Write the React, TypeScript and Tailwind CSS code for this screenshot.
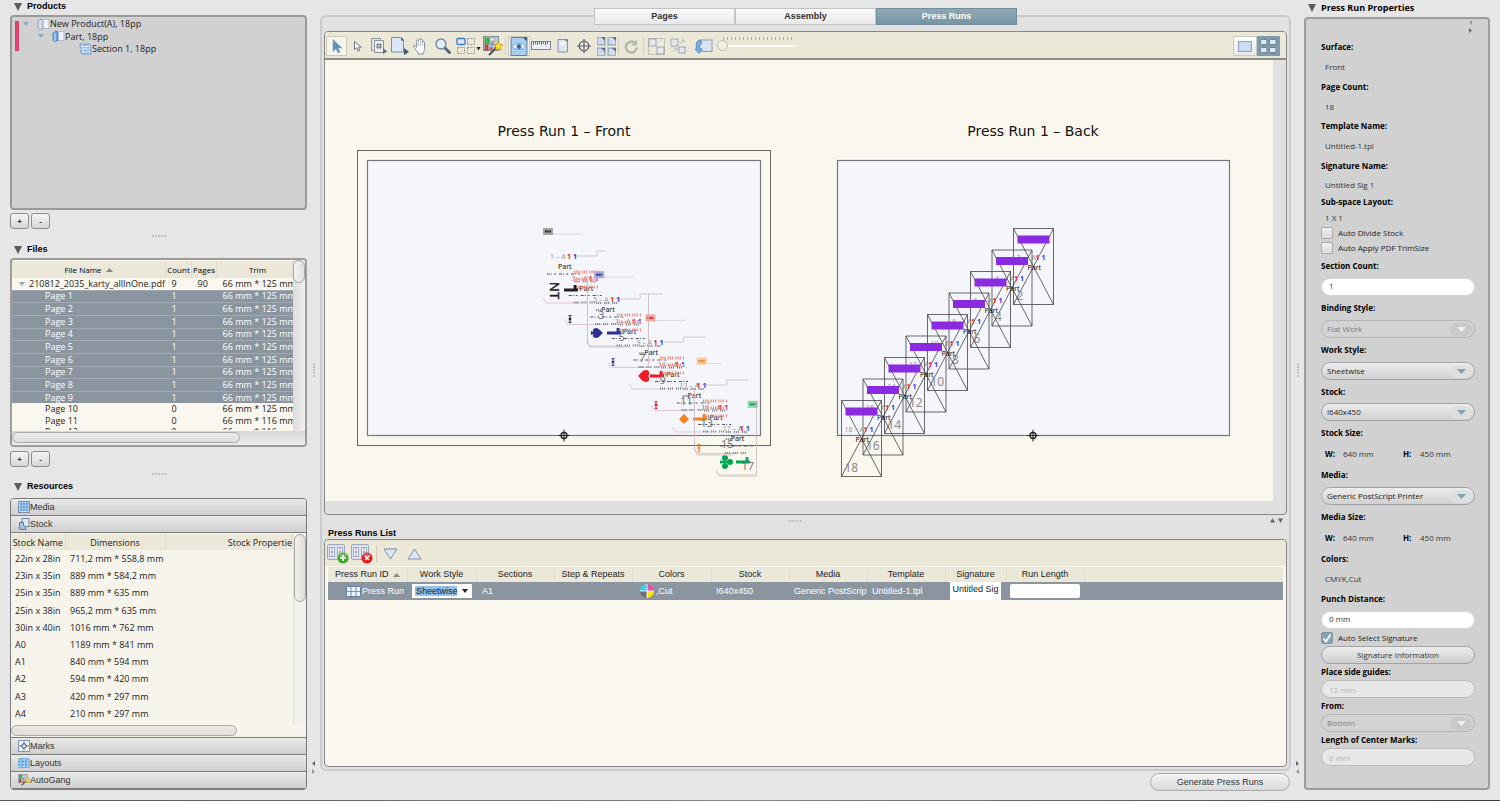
import { useState } from 'react'
import type { ReactNode } from 'react'
import clsx from 'clsx'

const sans = "font-['Open_Sans','Noto_Sans',sans-serif]"
const arial = "font-['Liberation_Sans',Arial,sans-serif]"

const filePages = [
  { name: 'Page 1', count: 1, trim: '66 mm * 125 mm' },
  { name: 'Page 2', count: 1, trim: '66 mm * 125 mm' },
  { name: 'Page 3', count: 1, trim: '66 mm * 125 mm' },
  { name: 'Page 4', count: 1, trim: '66 mm * 125 mm' },
  { name: 'Page 5', count: 1, trim: '66 mm * 125 mm' },
  { name: 'Page 6', count: 1, trim: '66 mm * 125 mm' },
  { name: 'Page 7', count: 1, trim: '66 mm * 125 mm' },
  { name: 'Page 8', count: 1, trim: '66 mm * 125 mm' },
  { name: 'Page 9', count: 1, trim: '66 mm * 125 mm' },
  { name: 'Page 10', count: 0, trim: '66 mm * 125 mm' },
  { name: 'Page 11', count: 0, trim: '66 mm * 116 mm' },
  { name: 'Page 12', count: 0, trim: '66 mm * 116 mm' },
]

const stocks = [
  ['22in x 28in', '711,2 mm * 558,8 mm'],
  ['23in x 35in', '889 mm * 584,2 mm'],
  ['25in x 35in', '889 mm * 635 mm'],
  ['25in x 38in', '965,2 mm * 635 mm'],
  ['30in x 40in', '1016 mm * 762 mm'],
  ['A0', '1189 mm * 841 mm'],
  ['A1', '840 mm * 594 mm'],
  ['A2', '594 mm * 420 mm'],
  ['A3', '420 mm * 297 mm'],
  ['A4', '210 mm * 297 mm'],
]

/* ---------- small shared parts ---------- */

const SectionTitle = ({ children, className }: { children: ReactNode; className?: string }) => (
  <h2 className={clsx('flex items-center gap-[5px] pl-1 font-bold text-black', className)}>
    <svg width="8" height="8" viewBox="0 0 8 8"><path d="M0 0h8L4 8z" fill="#5c5c5c" /></svg>
    {children}
  </h2>
)

const Dots = ({ vertical }: { vertical?: boolean }) => (
  <div className={clsx('flex gap-px', vertical && 'flex-col')}>
    {[0, 1, 2, 3, 4].map(i => <span key={i} className="size-[2px] bg-[#c2c2c2]" />)}
  </div>
)

const AddRemove = ({ what }: { what: string }) => (
  <div className={clsx('flex gap-[2px]', arial)}>
    {['+', '-'].map(sign => (
      <button
        key={sign}
        aria-label={`${sign === '+' ? 'Add' : 'Remove'} ${what}`}
        className="h-4 w-[19px] rounded-[3px] border border-[#8c8c8c] bg-linear-to-b from-[#f6f6f6] to-[#d6d6d6] pt-[2px] text-[8px] leading-none font-bold text-[#333]"
      >
        {sign}
      </button>
    ))}
  </div>
)

const SortArrow = () => (
  <svg className="ml-1 inline" width="7" height="4" viewBox="0 0 7 4"><path d="M3.500 0L7 4H0z" fill="#8a8a80" /></svg>
)

const Twisty = () => (
  <svg width="6" height="4" viewBox="0 0 6 4"><path d="M0 0h6L3 4z" fill="#8ba9ba" /></svg>
)

const SideArrows = ({ first, dimFirst }: { first: 'left' | 'right'; dimFirst?: boolean }) => {
  const [a, b] = dimFirst ? ['#999', '#666'] : ['#666', '#999']
  return (
    <svg width="5" height="13" viewBox="0 0 5 13">
      {first === 'left'
        ? <><path d="M4 0v5L1 2.500z" fill={a} /><path d="M1 8v5l3-2.500z" fill={b} /></>
        : <><path d="M1 0v5l3-2.500z" fill={a} /><path d="M4 8v5L1 10.500z" fill={b} /></>}
    </svg>
  )
}

/* ---------- icons ---------- */

const BookIcon = ({ blue }: { blue?: boolean }) => (
  <svg width="13" height="12" viewBox="0 0 13 12">
    <rect x="5" y="1.500" width="7" height="9" fill="#eef1f8" stroke="#b3b8cc" />
    <path d="M1 3l3-2 2 1v8.500l-3 1-2-1z" fill={blue ? '#6da3e3' : '#c9d3e4'} stroke={blue ? '#4a7bb8' : '#8b97ad'} strokeWidth=".8" />
    <path d="M3 3v8" stroke="#fff" strokeWidth=".7" />
  </svg>
)

const SectionIcon = () => (
  <svg width="13" height="12" viewBox="0 0 13 12">
    <path d="M1 1h10l1 2-1 2 1 2v4H3L1 9l2-3-2-3z" fill="#9cc9f2" stroke="#6f93bd" strokeWidth=".8" />
    <path d="M2 3.500h9M3 6h8M3 9h8" stroke="#fff" strokeWidth="1" />
    <path d="M6 2v8M9 2v8" stroke="#5a9fe0" strokeWidth=".5" />
  </svg>
)

const MediaIcon = () => (
  <svg width="12" height="12" viewBox="0 0 12 12">
    <rect x=".5" y=".5" width="11" height="11" fill="#cfdcee" stroke="#7a8ba6" />
    {[1.5, 4.5, 7.5].map(x => [1.5, 4.5, 7.5].map(y => <rect key={`${x}-${y}`} x={x + .5} y={y} width="2.400" height="2.400" fill="#5ea4ea" />))}
  </svg>
)

const StockIcon = () => (
  <svg width="12" height="12" viewBox="0 0 12 12">
    <path d="M4 .5h7v8H4z" fill="#dfe8f6" stroke="#6c80a3" />
    <path d="M1.500 4.500h4v3l2 1v3h-5c-2 0-2-3-1-3z" fill="#a9c4e6" stroke="#5f769c" />
    <circle cx="3" cy="10" r="1.200" fill="#fff" stroke="#5f769c" strokeWidth=".7" />
  </svg>
)

const MarksIcon = () => (
  <svg width="12" height="12" viewBox="0 0 12 12" fill="none">
    <rect x=".5" y=".5" width="11" height="11" fill="#e9eef6" stroke="#8296b3" />
    <path d="M6 1.500v9M1.500 6h9" stroke="#5a6f93" />
    <path d="M6 3L9 6 6 9 3 6z" fill="#8da6cb" stroke="#5a6f93" />
    <circle cx="6" cy="6" r="1" fill="#fff" />
  </svg>
)

const LayoutsIcon = () => (
  <svg width="12" height="10" viewBox="0 0 12 10">
    <rect x=".5" y=".5" width="11" height="9" rx="1" fill="#a7d0f7" stroke="#5fa0e0" strokeDasharray="2 1" />
    <path d="M4 1v8M8 1v8M1 3.500h10M1 6.500h10" stroke="#3f8ddb" strokeWidth=".8" strokeDasharray="2 1" />
  </svg>
)

const GangIcon = ({ size = 12 }: { size?: number }) => (
  <svg width={size} height={size} viewBox="0 0 20 20">
    <rect x=".5" y=".5" width="15" height="14" fill="#c4c8ce" stroke="#868d98" />
    <rect x="2" y="2" width="4" height="6" fill="#39c24a" stroke="#2a7d35" strokeWidth=".6" />
    <rect x="7" y="2" width="4" height="3" fill="#fff" stroke="#777" strokeWidth=".6" />
    <rect x="7.500" y="6.500" width="3" height="3" fill="#6d87d8" />
    <rect x="2" y="9" width="3" height="5" fill="#e24545" stroke="#903030" strokeWidth=".6" />
    <rect x="6" y="11" width="4" height="3" fill="#e26d5d" />
    <path d="M6 19L14 11" stroke="#444b55" strokeWidth="1.800" />
    <path d="M15.500 5.500l1.200 3 3.200.4-2.300 2.200.5 3.200-2.700-1.500-2.900 1.400.6-3.100-2.200-2.300 3.100-.4z" fill="#ffe326" stroke="#b58e12" strokeWidth=".7" />
  </svg>
)

const PointerIcon = () => (
  <svg width="18" height="18" viewBox="0 0 18 18">
    <path d="M5 2.500v12l3-2.700 2 4.200 2-1-2-4h4z" fill="#5e92bd" stroke="#7f9fb8" strokeWidth=".6" />
  </svg>
)

const SubPointerIcon = () => (
  <svg width="16" height="18" viewBox="0 0 16 18">
    <path d="M4.500 4.500v8l2.200-1.800 1.600 3.400 1.500-.7-1.500-3.200h3z" fill="#fff" stroke="#6d7787" />
  </svg>
)

const PageNumberIcon = () => (
  <svg width="18" height="18" viewBox="0 0 18 18">
    <path d="M1.500 1.500h9v12h-9z" fill="#dfe1e3" stroke="#9199a3" />
    <path d="M4.500 3.500h9v12h-9z" fill="#eef0f2" stroke="#8a929d" />
    <path d="M7.800 6v6M10.300 6v6M6 7.800h6M6 10.200h6" stroke="#5d6673" strokeWidth=".8" />
    <path d="M13 11v6l4-2.500z" fill="#55697f" />
  </svg>
)

const PageCursorIcon = () => (
  <svg width="18" height="20" viewBox="0 0 18 20">
    <path d="M.5 1.500h10l2 2.500v12H.5z" fill="#dbe7f7" stroke="#7d8fa8" />
    <path d="M10 1.500v3h3z" fill="#3f5878" />
    <path d="M13 12v7l5-3z" fill="#44597a" />
  </svg>
)

const HandIcon = () => (
  <svg width="18" height="18" viewBox="0 0 18 18">
    <path d="M6 15.500C4 13 2 10.500 1.500 9c.8-1 2-.2 3.200 1.400V4c.3-1.300 1.700-1.200 1.900 0V2.300c.4-1.300 1.800-1.200 2 0v.9c.4-1.200 1.800-1 2 .2v1.800c.5-1 1.900-.8 1.900.5v5.800c0 2-1 3.500-1.500 5.500H6z" fill="#fff" stroke="#75839a" strokeWidth=".9" />
    <path d="M6.700 4v5M8.700 4v5M10.700 5v4" stroke="#9aa7bb" strokeWidth=".7" />
  </svg>
)

const ZoomIcon = () => (
  <svg width="18" height="18" viewBox="0 0 18 18">
    <path d="M10.500 10.500l5 5" stroke="#55667d" strokeWidth="3" strokeLinecap="round" />
    <circle cx="7" cy="7" r="5" fill="#e1ecf8" stroke="#76879e" strokeWidth="1.400" />
  </svg>
)

const LayoutPickIcon = () => (
  <svg width="25" height="18" viewBox="0 0 25 18" fill="none">
    <rect x="1" y="1.500" width="8" height="6" rx="1" fill="#dbe9fa" stroke="#3f7cc4" strokeWidth="1.300" />
    <g stroke="#929a9e" strokeDasharray="2 1">
      <rect x="11.500" y="1.500" width="7" height="6" />
      <rect x="1.500" y="10.500" width="7" height="6" />
      <rect x="11.500" y="10.500" width="7" height="6" />
    </g>
    <path d="M20.500 10h4l-2 3.500z" fill="#222" />
  </svg>
)

const EyeIcon = () => (
  <svg width="18" height="19" viewBox="0 0 18 19">
    <path d="M1 .5h16v18H1z" fill="#a9cdef" stroke="#5e82a8" />
    <path d="M13 .5h4v4z" fill="#33577c" />
    <path d="M2.500 9.500C6 5.500 12 5.500 15.500 9.500 12 13.500 6 13.500 2.500 9.500z" fill="#fff" stroke="#6a97c2" strokeWidth=".8" />
    <circle cx="9" cy="9.500" r="2.600" fill="#3d86c2" /><circle cx="9" cy="9.500" r="1" fill="#1d4a72" />
  </svg>
)

const RulerIcon = () => (
  <svg width="20" height="10" viewBox="0 0 20 10">
    <rect x=".5" y=".5" width="19" height="8" fill="#e9eef8" stroke="#7b8494" />
    <path d="M2.500 1v3M4.500 1v2M6.500 1v3M8.500 1v2M10.500 1v3M12.500 1v2M14.500 1v3M16.500 1v2" stroke="#566e9e" />
  </svg>
)

const SheetIcon = () => (
  <svg width="12" height="14" viewBox="0 0 12 14">
    <path d="M1 .5h9.500v12.500H1z" fill="#dde5f3" stroke="#8a94a6" />
    <path d="M7.500.5h3v3z" fill="#5e7393" /><path d="M3 3.500h5M3 5.500h5" stroke="#f6f9ff" />
  </svg>
)

const CrosshairIcon = () => (
  <svg width="16" height="16" viewBox="0 0 16 16" fill="none" stroke="#5b6470">
    <circle cx="8" cy="8" r="4.800" strokeWidth="1.300" /><path d="M8 1v14M1 8h14" strokeWidth="1.200" />
  </svg>
)

const FourSheetsIcon = () => (
  <svg width="19" height="19" viewBox="0 0 19 19">
    <rect width="19" height="19" fill="#c4c4bd" />
    {[[0, 0], [11, 0], [0, 11], [11, 11]].map(([x, y]) => (
      <g key={`${x}-${y}`}>
        <rect x={x + .5} y={y + .5} width="7" height="7" fill="#cfdcef" stroke="#a5b0c0" />
        <path d={`M${x + 4} ${y}h4v4z`} fill="#59718f" />
      </g>
    ))}
    <path d="M9.500 0v19M0 9.500h19" stroke="#e9e8e0" strokeWidth="1" />
  </svg>
)

const RotateIcon = () => (
  <svg width="17" height="17" viewBox="0 0 17 17" fill="none">
    <path d="M11 4.200A5.500 5.500 0 1 0 13.800 9.500" stroke="#b4b7b2" strokeWidth="2.500" />
    <path d="M14 1v6.500H8z" fill="#b4b7b2" />
  </svg>
)

const GroupIcon = () => (
  <svg width="17" height="17" viewBox="0 0 17 17">
    <rect x=".5" y=".5" width="16" height="16" fill="none" stroke="#b0b0a6" strokeDasharray="2 1" />
    <rect x="1" y="1" width="7" height="7" fill="#e7eaf0" stroke="#9aa3b0" /><rect x="9" y="9" width="7" height="7" fill="#e7eaf0" stroke="#9aa3b0" />
  </svg>
)

const UngroupIcon = () => (
  <svg width="17" height="17" viewBox="0 0 17 17">
    <rect x="1" y="1" width="7" height="7" fill="#e1e4e8" stroke="#a7abb0" /><rect x="9" y="9" width="6" height="6" fill="#e7eaf0" stroke="#9aa3b0" />
    <path d="M10 6l4-4M11 2h3v3M3 14l4-4M4 10h3v3" stroke="#b3b4ab" fill="none" strokeWidth=".8" />
  </svg>
)

const TurnIcon = () => (
  <svg width="18" height="15" viewBox="0 0 18 15">
    <rect x="4.500" y="1" width="12.500" height="11.500" fill="#dbe3f1" stroke="#8d9bb3" />
    <path d="M5.500 1.500C1 1.500.8 5 1.500 10L0 10l4 4.500L7.500 10H5c-.8-3 0-5 2-6z" fill="#7aaee6" stroke="#3a76bb" strokeWidth=".7" />
  </svg>
)

const TablePlusIcon = ({ remove }: { remove?: boolean }) => (
  <svg width="22" height="20" viewBox="0 0 22 20">
    <rect x=".5" y=".5" width="17" height="15" rx="1" fill="#dce3ef" stroke="#9da8b9" />
    <path d="M2.500 3.500h5v9h-5zM10.500 3.500h5v9h-5zM5 3.500v9M13 3.500v9M2.500 8h5M10.500 8h5" stroke="#8f9db5" fill="#f3f6fb" strokeWidth=".8" />
    <circle cx="16" cy="14" r="5.500" fill={remove ? '#e01b22' : '#3fa528'} />
    <ellipse cx="16" cy="11.500" rx="4" ry="2.300" fill="#fff" opacity=".25" />
    {remove
      ? <path d="M14 12l4 4M18 12l-4 4" stroke="#fff" strokeWidth="1.500" />
      : <path d="M16 11v6M13 14h6" stroke="#fff" strokeWidth="1.600" />}
  </svg>
)

const ColorWheelIcon = () => (
  <svg width="14" height="14" viewBox="0 0 14 14">
    <path d="M7 7V0a7 7 0 0 0-7 7z" fill="#3ad0f0" /><path d="M7 7h7a7 7 0 0 0-7-7z" fill="#f04fa8" />
    <path d="M7 7v7a7 7 0 0 0 7-7z" fill="#ffe11a" /><path d="M7 7H0a7 7 0 0 0 7 7z" fill="#6d7176" />
    <path d="M7 0v14M0 7h14" stroke="#fff" strokeWidth=".8" />
  </svg>
)

/* ---------- left column ---------- */

const thCls = 'border-r border-[#dfdccb] bg-[#ebe8d9] font-normal'

const FilesPanel = () => (
  <div className="flex h-[189px] flex-col overflow-hidden rounded-[4px] border-2 border-[#9d9d97] bg-[#faf7ee]">
    <div className="flex min-h-0 flex-1">
      <div className="h-[170px] min-w-0 flex-1 overflow-hidden pt-px">
        <table className="h-[177px] w-full table-fixed border-collapse text-[9px] leading-[10px] whitespace-nowrap">
          <colgroup><col /><col className="w-[26px]" /><col className="w-[25px]" /><col className="w-[76px]" /></colgroup>
          <thead>
            <tr className="h-[17px] text-[8px]">
              <th className={thCls}>File Name<SortArrow /></th>
              <th className={thCls}>Count</th>
              <th className={thCls}>Pages</th>
              <th className={clsx(thCls, 'pl-[6px]')}>Trim</th>
            </tr>
          </thead>
          <tbody className="text-[#222]">
            <tr>
              <td className="pl-[7px]"><span className="flex items-center gap-1"><Twisty />210812_2035_karty_allInOne.pdf</span></td>
              <td className="pl-[6px]">9</td><td className="pl-[6px]">90</td>
              <td className="overflow-hidden pl-[6px]">66 mm * 125 mm</td>
            </tr>
            {filePages.map(p => (
              <tr key={p.name} className={p.count ? 'border-t border-[#a0a8b1] bg-[#8b95a0] text-white' : ''}>
                <td className="pl-[33px]">{p.name}</td>
                <td className="pl-[6px]">{p.count}</td>
                <td />
                <td className="overflow-hidden pl-[6px]">{p.trim}</td>
              </tr>
            ))}
          </tbody>
        </table>
      </div>
      <div className="w-[12px] bg-linear-to-r from-[#dcdcdc] to-[#efefef]">
        <div className="h-[23px] rounded-full border border-[#a5a5a5] bg-linear-to-r from-[#f4f4f4] to-[#dedede]" />
      </div>
    </div>
    <div className="h-[14px] bg-linear-to-b from-[#d8d8d8] to-[#ececec] py-px">
      <div className="h-[11px] w-[228px] rounded-full border border-[#a8a8a8] bg-linear-to-b from-[#ebebeb] to-[#dedede]" />
    </div>
  </div>
)

const AccordionBar = ({ icon, label }: { icon: ReactNode; label: string }) => (
  <button className={clsx('flex h-[17px] w-full shrink-0 items-center border-b border-[#7b7b7b] bg-linear-to-b from-[#e9e9e9] to-[#cfcfcf] pl-[7px] text-[9px] leading-none text-[#333]', arial)}>
    {icon}{label}
  </button>
)

const ResourcesPanel = () => (
  <div className="flex min-h-0 flex-1 flex-col overflow-hidden rounded-[4px] border border-[#7b7b7b]">
    <AccordionBar icon={<MediaIcon />} label="Media" />
    <AccordionBar icon={<StockIcon />} label="Stock" />
    <div className="flex min-h-0 flex-1 flex-col border-b border-[#7b7b7b] bg-[#f7f4ec] pt-px">
      <div className="flex min-h-0 flex-1">
        <div className="min-w-0 flex-1 overflow-hidden">
          <table className="h-[188px] w-full table-fixed border-collapse text-[9px] leading-none whitespace-nowrap text-[#222]">
            <colgroup><col className="w-[54px]" /><col className="w-[100px]" /><col /></colgroup>
            <thead>
              <tr className="h-4">
                <th className={thCls}>Stock Name</th>
                <th className={thCls}>Dimensions</th>
                <th className={clsx(thCls, 'text-right')}>Stock Propertie</th>
              </tr>
            </thead>
            <tbody>
              {stocks.map(([name, size]) => (
                <tr key={name} className="h-[17px]">
                  <td className="pl-1">{name}</td><td className="pl-[5px]">{size}</td><td />
                </tr>
              ))}
            </tbody>
          </table>
        </div>
        <div className="w-[13px] border-l border-[#e6e2d8] bg-[#f3f1eb]">
          <div className="h-[68px] rounded-full border border-[#a5a5a5] bg-linear-to-r from-[#f2f1ec] to-[#dfddd6]" />
        </div>
      </div>
      <div className="h-[12px]">
        <div className="h-[11px] w-[226px] rounded-full border border-[#aaa9a4] bg-linear-to-b from-[#ebe9e2] to-[#e0ded8]" />
      </div>
    </div>
    <AccordionBar icon={<MarksIcon />} label="Marks" />
    <AccordionBar icon={<LayoutsIcon />} label="Layouts" />
    <AccordionBar icon={<GangIcon />} label="AutoGang" />
  </div>
)

const LeftColumn = () => (
  <aside className="flex w-[297px] shrink-0 flex-col pb-[10px]">
    <SectionTitle className={clsx('h-[15px] pb-[2px] text-[9px]', arial)}>Products</SectionTitle>
    <div className="flex h-[195px] rounded-[4px] border-2 border-[#9a9a9a] bg-[#d1d1d1] pl-[3px]">
      <div className="mt-1 h-[30px] w-1 bg-[#e2426b]" />
      <ul className="pl-1 text-[9px] leading-[13px] text-[#222]">
        <li className="flex h-[13px] items-center"><Twisty /><span className="w-[8px]" /><BookIcon />New Product(A), 18pp</li>
        <li className="flex h-[12px] items-center pl-[15px]"><Twisty /><span className="w-[8px]" /><BookIcon blue />Part, 18pp</li>
        <li className="flex h-[13px] items-center pl-[56px]"><SectionIcon />Section 1, 18pp</li>
      </ul>
    </div>
    <div className="h-[19px] pt-[3px]"><AddRemove what="product" /></div>
    <div className="flex h-[13px] items-center justify-center"><Dots /></div>
    <SectionTitle className={clsx('h-[16px] text-[9px]', arial)}>Files</SectionTitle>
    <FilesPanel />
    <div className="h-[20px] pt-1"><AddRemove what="file" /></div>
    <div className="flex h-[13px] items-center justify-center"><Dots /></div>
    <SectionTitle className={clsx('h-[18px] pb-1 text-[9px]', arial)}>Resources</SectionTitle>
    <ResourcesPanel />
  </aside>
)

/* ---------- press sheet drawing ---------- */

const RegMark = ({ x, y }: { x: number; y: number }) => (
  <g stroke="#222" fill="none">
    <circle cx={x} cy={y} r="3" strokeWidth="1.300" /><path d={`M${x - 6} ${y}h12M${x} ${y - 6}v12`} />
  </g>
)

const suitColors = ['#222222', '#2e3192', '#ed1c24', '#f58220', '#00a651']
const badgeColors = ['#a3a3a3', '#a9a9d6', '#f7a99a', '#fbc79a', '#8fd3a8']

const Suit = ({ kind }: { kind: number }) => {
  const fill = suitColors[kind]
  if (kind === 0) return <text transform="translate(-4 -8) rotate(90)" fontSize="13" fill={fill} stroke={fill} strokeWidth=".4">NT</text>
  if (kind === 1) return <path d="M6 0C3-3 1-5-1-5c-3 0-4 3-2 4l-3-1v4l3-1c-2 1-1 4 2 4 2 0 4-2 7-5z" fill={fill} />
  if (kind === 2) return <path d="M-6 0C-3-3-1-6 2-6c4 0 4 5 2 6 2 1 2 6-2 6-3 0-5-3-8-6z" fill={fill} />
  if (kind === 3) return <path d="M0-5l5 5-5 5-5-5z" fill={fill} />
  return <g fill={fill}><circle cx="-1" cy="-4" r="3" /><circle cx="-1" cy="4" r="3" /><circle cx="4" cy="0" r="3" /><path d="M-6-1.500L4-.5v1L-6 1.500z" /></g>
}

const FrontCard = ({ i }: { i: number }) => {
  const x = 543 + i * 21.6
  const y = 228 + i * 21.5
  return (
    <g>
      {i % 2 === 0 && i < 8 && (
        <path d={`M${x + 31} ${y + 28}h23v-5h${i === 0 ? 8 : 22}`} stroke="#c9bcc2" fill="none" strokeWidth=".8" />
      )}
      <path d={`M${x} ${y + 70}l3 5h37`} stroke="#d5b7bb" fill="none" strokeWidth=".7" />
      <text x={x + 7} y={y + 31} fontSize="7" fill="#9a9a9a">{i * 2 + 1} – A</text>
      <text x={x + 24} y={y + 31} fontSize="7" fontWeight="bold" fill="#ee2222">1</text>
      <text x={x + 30} y={y + 31} fontSize="7" fontWeight="bold" fill="#3333ee">1</text>
      <text x={x + 15} y={y + 41} fontSize="7" fill="#111">Part</text>
      {/* greeked body copy */}
      <path d={`M${x + 4} ${y + 46}h35`} stroke="#555" strokeWidth="1.200" strokeDasharray="3 1 1 2 2 3" />
      {i > 0 && (
        <path
          d={`M${x + 10} ${y + 32}h22M${x + 10} ${y + 39}h5M${x + 9} ${y + 53}h24`}
          stroke="#777"
          strokeWidth="2.200"
          strokeDasharray="1 1 1 1 1 3"
        />
      )}
    </g>
  )
}

const FrontSuitCard = ({ kind }: { kind: number }) => {
  const x = 543 + kind * 51.2
  const y = 228 + kind * 43.2
  const bx = 564 + kind * 43
  const by = 290 + kind * 43
  const suitX = [554, 597, 644, 684, 726][kind]
  return (
    <g>
      {kind < 4 && <path d={`M${x + 10} ${y + 6}h${kind < 3 ? 30 : 14}`} stroke="#cfcfd6" strokeWidth=".8" />}
      <rect x={x} y={y} width="10" height="7" fill={badgeColors[kind]} />
      <path d={`M${x + 2} ${y + 3.5}h6`} stroke={suitColors[kind]} strokeWidth="2" strokeDasharray="2 .5" />
      {kind < 4 && (
        <g stroke="#ef8a7c" strokeWidth="2.800">
          {[0, 7, 15].map(dy => (
            <path key={dy} d={`M${bx + 10} ${by - 18 + dy}h24`} strokeDasharray="1.200 1 1.200 1 1.200 2" />
          ))}
        </g>
      )}
      <g transform={`translate(${suitX} ${by})`}><Suit kind={kind} /></g>
      <path d={`M${bx} ${by}h14M${bx + 11} ${by - 5}v5`} stroke={suitColors[kind]} strokeWidth="2.800" />
      {kind < 4 && <path d={`M${bx + 6} ${by + 25}v8`} stroke={suitColors[kind]} strokeWidth="2.500" strokeDasharray="1.500 1 3 1" />}
    </g>
  )
}

const BackCard = ({ i }: { i: number }) => {
  const x = 1013.500 - i * 21.5
  const y = 228.500 + i * 21.5
  const n = (i + 1) * 2
  return (
    <g>
      <path d={`M${x} ${y}h40v76h-40zM${x} ${y}l40 76M${x + 40} ${y}l-40 76`} stroke="#444" strokeWidth=".8" fill="none" />
      <rect x={x + 4} y={y + 7} width="32" height="8" fill="#8a2be2" />
      <text x={x + 3} y={y + 31} fontSize="7" fill="#999">{n}</text>
      <text x={x + 18} y={y + 31} fontSize="7" fill="#999">A</text>
      <text x={x + 22} y={y + 31} fontSize="7" fontWeight="bold" fill="#ee2222">1</text>
      <text x={x + 28} y={y + 31} fontSize="7" fontWeight="bold" fill="#3333ee">1</text>
      <text x={x + 14} y={y + 41} fontSize="7" fill="#111">Part</text>
      <text x={x + 3} y={y + 71} fontSize="12" fill="#8c8c8c">{n}</text>
    </g>
  )
}

const PressSheets = () => (
  <svg className="block size-full font-['Noto_Sans',sans-serif]" viewBox="325 60 948 441" role="img" aria-label="Press run sheets">
    <g className="font-['DejaVu_Sans',sans-serif]" fontSize="14" textAnchor="middle" fill="#111">
      <text x="564" y="136">Press Run 1 – Front</text>
      <text x="1033" y="136">Press Run 1 – Back</text>
    </g>
    <rect x="357.500" y="150.500" width="413" height="295" fill="none" stroke="#666" />
    <rect x="367.500" y="160.500" width="393" height="275" fill="#f4f6fc" stroke="#777" strokeWidth="1.200" />
    <rect x="837.500" y="160.500" width="392" height="275" fill="#f4f6fc" stroke="#777" strokeWidth="1.200" />
    {[0, 1, 2, 3, 4, 5, 6, 7, 8].map(i => <FrontCard key={i} i={i} />)}
    {[0, 1, 2, 3, 4].map(k => <FrontSuitCard key={k} kind={k} />)}
    {[3, 5, 7, 9, 11, 13, 15, 17].map((n, i) => (
      <text key={n} x={598 + i * 20.5} y={319 + i * 21.5} fontSize="11" fill="#777">{n}</text>
    ))}
    <path d="M587.500 275v67l3 5h40M648.500 293v72M694.500 388v62l3 5h35M756.500 401v75h-37l-3-4" stroke="#ccb8bd" strokeWidth=".8" fill="none" />
    <RegMark x={564} y={435.5} />
    {[0, 1, 2, 3, 4, 5, 6, 7, 8].map(i => <BackCard key={i} i={i} />)}
    <RegMark x={1033} y={435.5} />
  </svg>
)

/* ---------- centre ---------- */

const Tool = ({ label, active, wide, children }: { label: string; active?: boolean; wide?: boolean; children: ReactNode }) => (
  <button
    aria-label={label}
    title={label}
    className={clsx('flex h-[20px] shrink-0 items-center justify-center', wide ? 'w-[22px]' : 'w-[21px]', active && 'border border-[#cdcbb8] bg-[#f7f5ea]')}
  >
    {children}
  </button>
)

const Sep = () => <span className="mx-px h-[18px] w-px shrink-0 bg-[#d3d0bf]" />

const Toolbar = () => (
  <div className="flex h-[28px] shrink-0 items-center border-b-2 border-[#8d8d86] bg-[#ebe8d8] pt-[2px] pr-[6px] pl-px">
    <Tool label="Select" active><PointerIcon /></Tool>
    <Tool label="Sub-select"><SubPointerIcon /></Tool>
    <Tool label="Page numbering"><PageNumberIcon /></Tool>
    <Tool label="Page select"><PageCursorIcon /></Tool>
    <Tool label="Pan" wide><HandIcon /></Tool>
    <Tool label="Zoom" wide><ZoomIcon /></Tool>
    <button aria-label="Layout options" className="flex w-[28px] shrink-0 justify-center"><LayoutPickIcon /></button>
    <Tool label="Auto gang" wide><GangIcon size={20} /></Tool>
    <Sep />
    <span className="w-px" />
    <Tool label="Preview" wide active><EyeIcon /></Tool>
    <Tool label="Ruler" wide><RulerIcon /></Tool>
    <Tool label="Sheet"><SheetIcon /></Tool>
    <Tool label="Marks" wide><CrosshairIcon /></Tool>
    <Tool label="Show pages" wide><FourSheetsIcon /></Tool>
    <Sep />
    <Tool label="Rotate" wide><RotateIcon /></Tool>
    <Sep />
    <Tool label="Group" wide><GroupIcon /></Tool>
    <Tool label="Ungroup" wide><UngroupIcon /></Tool>
    <span className="w-1" />
    <Tool label="Turn sheet" wide><TurnIcon /></Tool>
    <div className="flex w-[80px] flex-col items-end pb-1 pl-[2px]">
      <div className="h-[3px] w-[72px] bg-[repeating-linear-gradient(90deg,#aab2b0_0_1px,transparent_1px_4px)]" />
      <input
        type="range"
        aria-label="Sheet turn"
        defaultValue={0}
        className="h-[11px] w-full appearance-none bg-[linear-gradient(#fbfaf4,#fbfaf4)] bg-[length:100%_2px] bg-center bg-no-repeat [&::-webkit-slider-thumb]:size-[11px] [&::-webkit-slider-thumb]:appearance-none [&::-webkit-slider-thumb]:rounded-full [&::-webkit-slider-thumb]:border [&::-webkit-slider-thumb]:border-[#bdbbb0] [&::-webkit-slider-thumb]:bg-[#efede4]"
      />
    </div>
    <div className="ml-auto flex">
      <button aria-label="Single view" className="flex h-[20px] w-[24px] items-center justify-center border border-[#c9c9c4] bg-linear-to-b from-white to-[#e6e6e6]">
        <svg width="14" height="11" viewBox="0 0 14 11"><rect x=".5" y=".5" width="13" height="10" fill="#cddcf3" stroke="#9aa5b8" strokeWidth="1.200" /></svg>
      </button>
      <button aria-label="Grid view" className="flex h-[20px] w-[23px] items-center justify-center bg-[#7c9cac]">
        <svg width="17" height="14" viewBox="0 0 17 14" fill="#dde8f7" stroke="#6c8496">
          <rect x=".5" y=".5" width="6.500" height="5" rx="1" /><rect x="9.500" y=".5" width="6.500" height="5" rx="1" />
          <rect x=".5" y="8.500" width="6.500" height="5" rx="1" /><rect x="9.500" y="8.500" width="6.500" height="5" rx="1" />
        </svg>
      </button>
    </div>
  </div>
)

const PressRunsTable = () => (
  <table className="w-full table-fixed border-collapse text-[9px] leading-none whitespace-nowrap text-[#222]">
    <colgroup>
      <col className="w-[79px]" /><col className="w-[69px]" /><col className="w-[78px]" /><col className="w-[78px]" />
      <col className="w-[79px]" /><col className="w-[78px]" /><col className="w-[78px]" /><col className="w-[78px]" />
      <col className="w-[61px]" /><col className="w-[78px]" /><col />
    </colgroup>
    <thead>
      <tr className="h-[15px]">
        <th className={thCls}>Press Run ID<SortArrow /></th>
        {['Work Style', 'Sections', 'Step & Repeats', 'Colors', 'Stock', 'Media', 'Template', 'Signature', 'Run Length'].map(h => (
          <th key={h} className={thCls}>{h}</th>
        ))}
        <th className="bg-[#ebe8d9]" />
      </tr>
    </thead>
    <tbody>
      <tr className="h-[18px] bg-[#8b95a0] text-white">
        <td className="pl-[18px]">
          <span className="flex items-center gap-px">
            <svg className="shrink-0" width="15" height="11" viewBox="0 0 15 11">
              <rect x=".5" y=".5" width="14" height="10" rx="1" fill="#e9f1fb" stroke="#6a7f9c" />
              <path d="M5 1v9M10 1v9M1 5.500h13" stroke="#6a9ad0" />
            </svg>
            Press Run
          </span>
        </td>
        <td className="pl-[5px]">
          <span className="relative block w-[60px]">
            <select aria-label="Work style" className="block h-[14px] w-full appearance-none bg-white bg-[linear-gradient(#92c0e8,#92c0e8)] bg-[length:42px_10px] bg-[position:3px_center] bg-no-repeat pl-[4px] text-[9px] text-[#123]">
              <option>Sheetwise</option>
            </select>
            <svg className="pointer-events-none absolute top-[5px] right-[4px]" width="6" height="4" viewBox="0 0 6 4"><path d="M0 0h6L3 4z" fill="#222" /></svg>
          </span>
        </td>
        <td className="pl-[6px]">A1</td>
        <td />
        <td className="pl-2"><span className="flex items-center gap-[2px]"><ColorWheelIcon />,Cut</span></td>
        <td className="pl-[5px]">!640x450</td>
        <td className="pl-[5px]">Generic PostScrip</td>
        <td className="pl-[5px]">Untitled-1.tpl</td>
        <td className="px-[5px]"><span className="block h-[18px] bg-white pt-[3px] text-center text-[#222]">Untitled Sig</span></td>
        <td className="pl-[4px]"><input aria-label="Run length" className="block h-[14px] w-[70px] rounded-[2px] bg-white px-1 text-black" /></td>
        <td />
      </tr>
    </tbody>
  </table>
)

const tabs = ['Pages', 'Assembly', 'Press Runs']

const Centre = () => {
  const [tab, setTab] = useState('Press Runs')

  return (
    <main className={clsx('flex min-w-0 flex-1 flex-col pb-[9px]', arial)}>
      <div className="mt-[15px] flex min-h-0 flex-1 flex-col rounded-[6px] border-2 border-[#cbcbcb] bg-[#e1e1e1] px-[2px] pb-[2px]">
        {/* tabs straddle the frame's top edge */}
        <div className="-mt-[9px] mb-[6px] flex h-[17px] justify-center">
          {tabs.map(t => (
            <button
              key={t}
              onClick={() => setTab(t)}
              className={clsx(
                'w-[141px] border text-[9px] leading-none font-bold',
                t === tab
                  ? 'border-[#718d9d] bg-linear-to-b from-[#8fa8b5] to-[#7795a5] text-white'
                  : 'border-[#c4c4c4] bg-linear-to-b from-[#fafafa] to-[#e9e9e9] text-[#333]',
              )}
            >
              {t}
            </button>
          ))}
        </div>
        <div className="flex min-h-0 flex-1 flex-col overflow-hidden rounded-[4px] border border-[#878787] bg-[#e0e0e0]">
          <Toolbar />
          <div className="mr-[13px] mb-[13px] min-h-0 flex-1 bg-[#faf7ee]"><PressSheets /></div>
        </div>
        <div className="flex h-[11px] items-center pr-1">
          <div className="flex flex-1 justify-center pr-[4px]"><Dots /></div>
          <svg width="13" height="5" viewBox="0 0 13 5"><path d="M0 4.500h5L2.500 0z" fill="#666" /><path d="M8 .5h5L10.500 5z" fill="#666" /></svg>
        </div>
        <h2 className="h-[13px] pl-1 text-[9px] leading-[14px] font-bold text-black">Press Runs List</h2>
        <div className="flex h-[228px] shrink-0 flex-col rounded-[4px] border border-[#878787] bg-[#faf7ee]">
          <div className="flex h-[26px] shrink-0 items-center rounded-t-[4px] bg-[#ebe8d8] pt-px pl-[2px]">
            <button aria-label="Add press run" className="w-[24px]"><TablePlusIcon /></button>
            <button aria-label="Remove press run" className="w-[24px]"><TablePlusIcon remove /></button>
            <Sep />
            <button aria-label="Move down" className="ml-px w-[24px] pl-1"><svg width="15" height="12" viewBox="0 0 15 12"><path d="M1 1h13L7.500 11z" fill="#dbe6f4" stroke="#7e8ea3" /></svg></button>
            <button aria-label="Move up" className="w-[24px] pl-1"><svg width="15" height="12" viewBox="0 0 15 12"><path d="M1 11h13L7.500 1z" fill="#dbe6f4" stroke="#7e8ea3" /></svg></button>
          </div>
          <div className="px-[3px] pt-px"><PressRunsTable /></div>
        </div>
      </div>
      <button className="mt-[2px] mr-px h-[18px] w-[140px] shrink-0 self-end rounded-full border border-[#a9a9a9] bg-linear-to-b from-[#f4f4f4] to-[#dadada] text-[9px] leading-none text-[#333]">
        Generate Press Runs
      </button>
    </main>
  )
}

/* ---------- properties ---------- */

const Label = ({ children, htmlFor, h = 'h-[22px]' }: { children: ReactNode; htmlFor?: string; h?: string }) => (
  <label htmlFor={htmlFor} className={clsx('flex items-center font-bold text-black', h)}>{children}</label>
)

const Value = ({ children, h = 'h-5' }: { children: ReactNode; h?: string }) => (
  <div className={clsx('flex items-center pl-1', h)}>{children}</div>
)

const TextField = ({ id, value, disabled }: { id: string; value: string; disabled?: boolean }) => (
  <div className="flex h-5 items-center">
    <input
      id={id}
      defaultValue={value}
      disabled={disabled}
      className={clsx('h-[18px] w-full rounded-full border px-[7px]', disabled ? 'border-[#bcbcbc] bg-[#e7e7e7] text-[#b3b3b3]' : 'border-[#d6d6d6] bg-white pb-[4px] text-[#333]')}
    />
  </div>
)

const SelectField = ({ id, value, disabled }: { id: string; value: string; disabled?: boolean }) => (
  <div className="relative flex h-5 items-center">
    <select
      id={id}
      disabled={disabled}
      className={clsx(
        'h-[18px] w-full appearance-none rounded-full border pl-[5px] opacity-100',
        disabled ? 'border-[#b4b4b4] bg-[#d3d3d3] text-[#7d7d7d]' : 'border-[#a3a3a3] bg-linear-to-b from-[#ededed] to-[#d0d0d0] text-[#222]',
      )}
    >
      <option>{value}</option>
    </select>
    <span className={clsx('pointer-events-none absolute right-[3px] flex h-[13px] w-[22px] items-center justify-center rounded-full', disabled ? 'bg-[#c9c9c9]' : 'bg-[#dfdfdf]')}>
      <svg width="9" height="5" viewBox="0 0 9 5"><path d="M0 0h9L4.500 5z" fill={disabled ? '#f0f0f0' : '#7fa3b6'} /></svg>
    </span>
  </div>
)

const Check = ({ label, checked }: { label: string; checked?: boolean }) => (
  <label className="flex h-[15px] items-center gap-[5px] text-[#222]">
    <span className="relative flex">
      <input
        type="checkbox"
        defaultChecked={checked}
        className="peer size-[12px] appearance-none rounded-[2px] border border-[#aaa] bg-linear-to-b from-[#f0f0f0] to-[#dcdcdc] checked:border-[#7d97a5] checked:from-[#86a3b3] checked:to-[#86a3b3]"
      />
      <svg className="pointer-events-none absolute top-0 left-0 hidden peer-checked:block" width="12" height="12" viewBox="0 0 12 12">
        <path d="M2.500 6.500l2.500 3L9.500 2.500" stroke="#fff" strokeWidth="1.800" fill="none" />
      </svg>
    </span>
    {label}
  </label>
)

const SizeRow = () => (
  <div className="flex h-5 items-center pl-1">
    <b className="w-[18px] text-black">W:</b><span className="w-[60px]">640 mm</span>
    <b className="w-[17px] text-black">H:</b><span>450 mm</span>
  </div>
)

const Properties = () => (
  <aside className="flex w-[186px] shrink-0 flex-col pb-[10px]">
    <SectionTitle className="h-[17px] pb-[2px] text-[9px]">Press Run Properties</SectionTitle>
    <div className="flex-1 rounded-[4px] border-2 border-[#9c9c9c] bg-[#d1d1d1] pr-[13px] pl-[15px] text-[8px] text-[#333]">
      <div className="flex h-[18px] justify-end pt-px pr-[2px]"><SideArrows first="left" dimFirst /></div>
      <Label h="h-5">Surface:</Label>
      <Value>Front</Value>
      <Label h="h-5">Page Count:</Label>
      <Value h="h-[19px]">18</Value>
      <Label h="h-5">Template Name:</Label>
      <Value>Untitled-1.tpl</Value>
      <Label h="h-5">Signature Name:</Label>
      <Value h="h-[18px]">Untitled Sig 1</Value>
      <Label h="h-4">Sub-space Layout:</Label>
      <Value h="h-[15px]">1 X 1</Value>
      <Check label="Auto Divide Stock" />
      <Check label="Auto Apply PDF TrimSize" />
      <Label htmlFor="sections">Section Count:</Label>
      <TextField id="sections" value="1" />
      <Label htmlFor="binding">Binding Style:</Label>
      <SelectField id="binding" value="Flat Work" disabled />
      <Label htmlFor="work">Work Style:</Label>
      <SelectField id="work" value="Sheetwise" />
      <Label htmlFor="stock" h="h-[21px]">Stock:</Label>
      <SelectField id="stock" value="!640x450" />
      <Label>Stock Size:</Label>
      <SizeRow />
      <Label htmlFor="media">Media:</Label>
      <SelectField id="media" value="Generic PostScript Printer" />
      <Label>Media Size:</Label>
      <SizeRow />
      <Label>Colors:</Label>
      <Value h="h-[18px]">CMYK,Cut</Value>
      <Label htmlFor="punch">Punch Distance:</Label>
      <TextField id="punch" value="0 mm" />
      <Check label="Auto Select Signature" checked />
      <div className="flex h-5 items-center">
        <button className="h-[18px] w-full rounded-full border border-[#a3a3a3] bg-linear-to-b from-[#ededed] to-[#cdcdcd] leading-none">Signature Information</button>
      </div>
      <Label htmlFor="guides" h="h-[14px]">Place side guides:</Label>
      <TextField id="guides" value="12 mm" disabled />
      <Label htmlFor="from" h="h-[14px]">From:</Label>
      <SelectField id="from" value="Bottom" disabled />
      <Label htmlFor="marks" h="h-[14px]">Length of Center Marks:</Label>
      <TextField id="marks" value="6 mm" disabled />
    </div>
  </aside>
)

const Gutter = ({ first }: { first: 'left' | 'right' }) => (
  <div className="relative flex w-[13px] shrink-0 items-center justify-center pb-[60px]">
    <Dots vertical />
    <div className="absolute bottom-[26px]"><SideArrows first={first} /></div>
  </div>
)

export default function App() {
  return (
    <div className={clsx('flex h-screen min-h-[801px] flex-col bg-[#e6e6e6]', sans)}>
      <div className="flex min-h-0 flex-1 pr-[10px] pl-[10px]">
        <LeftColumn />
        <Gutter first="left" />
        <Centre />
        <Gutter first="right" />
        <Properties />
      </div>
      <div className="h-px bg-linear-to-r from-[#50555a] via-[#7d8a84] to-[#3e3e3e]" />
    </div>
  )
}
